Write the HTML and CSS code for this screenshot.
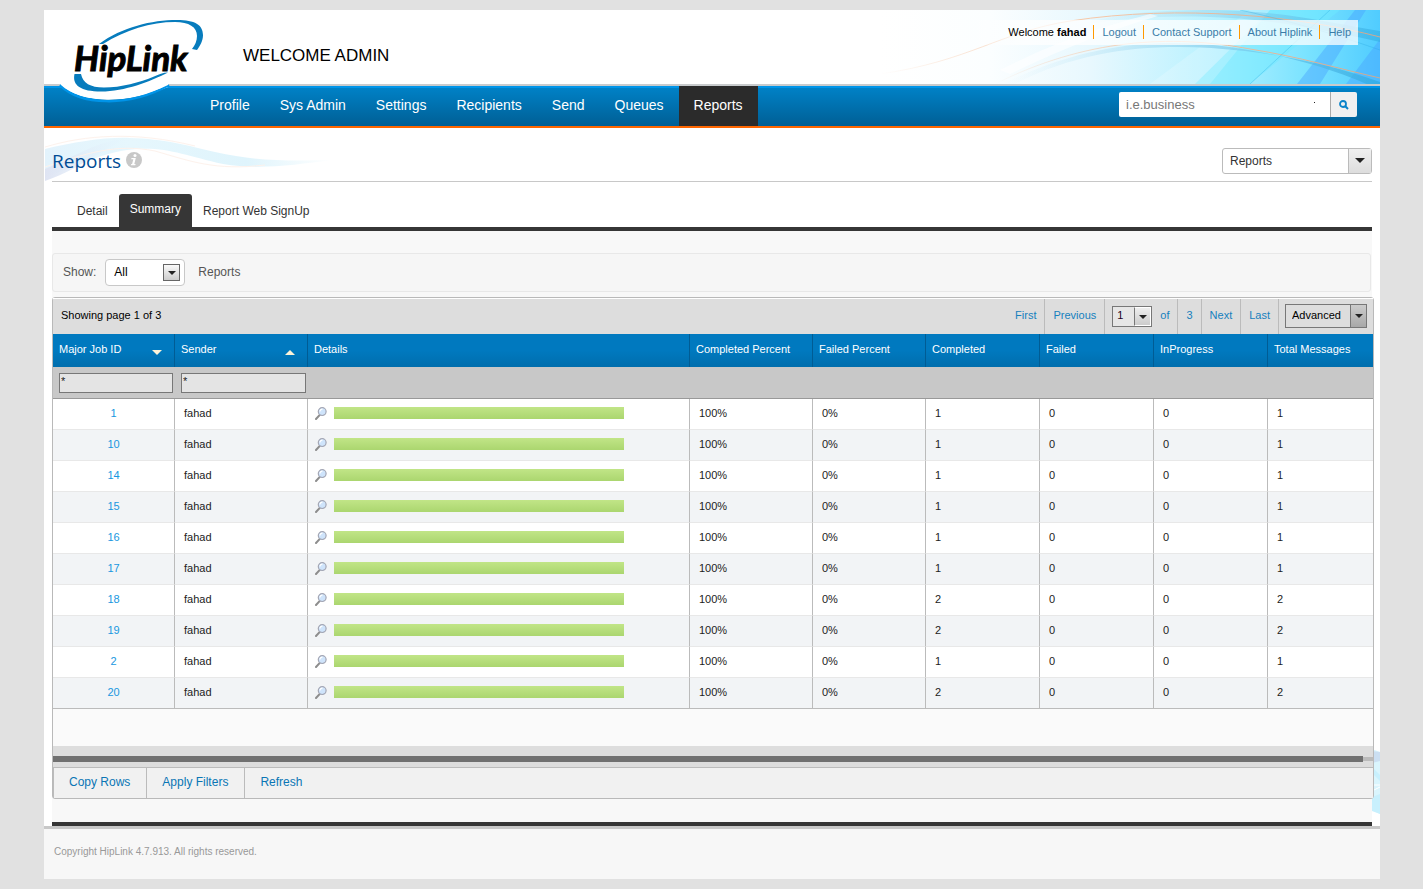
FILE: index.html
```html
<!DOCTYPE html>
<html lang="en">
<head>
<meta charset="utf-8">
<title>HipLink - Reports</title>
<link rel="stylesheet" href="styles.css">
</head>
<body>
<svg class="defs" aria-hidden="true">
  <symbol id="lens" viewBox="0 0 12 13">
    <path d="M4.800 7.800L1 12" stroke="#8d8d8d" stroke-width="2" stroke-linecap="round"/>
    <circle cx="7.200" cy="4.600" r="3.900" fill="#cfe4fb" stroke="#a3a6b4" stroke-width="1.200"/>
    <path d="M5 4.500a2.300 2.300 0 0 1 2.500-2.300" stroke="#fff" stroke-width="1.200" fill="none"/>
  </symbol>
</svg>
<div class="page">
  <header class="header">
    <svg class="header-art" viewBox="0 0 500 74" preserveAspectRatio="xMaxYMid slice" aria-hidden="true">
      <defs>
        <linearGradient id="sky"><stop offset="0" stop-color="#fff"/><stop offset=".22" stop-color="#fbfeff"/><stop offset=".42" stop-color="#e8f8fe"/><stop offset=".68" stop-color="#b5f1ff"/><stop offset=".85" stop-color="#7be3ff"/><stop offset="1" stop-color="#50ccff"/></linearGradient>
        <linearGradient id="fade"><stop offset="0" stop-color="#d5effb" stop-opacity="0"/><stop offset=".4" stop-color="#a8ddf2"/><stop offset="1" stop-color="#2fa9df"/></linearGradient>
        <linearGradient id="thread"><stop offset="0" stop-color="#f8c8a8" stop-opacity="0"/><stop offset=".4" stop-color="#f8c8a8"/><stop offset="1" stop-color="#d0a890"/></linearGradient>
      </defs>
      <path fill="url(#sky)" d="M0 0h500v74H0z"/>
      <path fill="#6ee9ff" opacity=".5" d="M315 74L390 0h70l-90 74z"/>
      <path fill="#fff" opacity=".2" d="M270 74L370 0h20l-60 74z"/>
      <path fill="#4aa5ff" opacity=".45" d="M417 74L475 0h11l-46 74zM466 74l34-45v45z"/>
      <path fill="url(#fade)" opacity=".7" d="M122 74C210 32 280 28 350 37c55 8 105 22 150 43v-8c-45-16-85-25-135-31-80-9-160-6-240 38z" />
      <path fill="url(#fade)" opacity=".55" d="M180 19C240 3 270 0 335 0c70 1 120 14 165 21v11C440 19 390 9 330 7c-60-2-105 3-150 12z"/>
      <path fill="#fff" opacity=".6" d="M120 60C170 35 210 20 270 4l8 2C230 20 180 40 130 64z"/>
      <path fill="none" stroke="url(#thread)" d="M0 64C90 51 120 22 190 11c110-17 230-5 310 16"/>
      <path fill="none" stroke="url(#thread)" d="M115 74c90-45 175-50 255-35 50 8 90 20 130 29"/>
      <path fill="none" stroke="#20a3df" opacity=".3" d="M360 0c55 12 100 26 140 40M370 74L450 0"/>
    </svg>
    <svg class="logo" viewBox="0 0 170 96" role="img" aria-label="HipLink">
      <path fill="#fff" d="M16 73h108v4C82 95 36 93 17 76z"/>
      <path fill="none" stroke="#0094e8" stroke-width="2.500" d="M16 75C36 95 84 98 125 75"/>
      <path fill="#fff" d="M15 70h112l-3 5C82 95 36 93 17 75z"/>
      <g fill="#077cbd">
        <path d="M55 34C78 17 108 10 133 10c18 0 26 5 26 15 0 6-3 11-6 15l-5-1c3-4 5-8 5-13 0-9-8-14-22-14-24 0-50 8-72 22z"/>
        <path d="M30.500 64h6.500c2 9 9 13.500 23 13.500 17 0 36-5 50-11 5-2 9-4 14-4-18 9-43 19-67 19-20 0-29-6-26.500-17.500z"/>
      </g>
      <text class="logo-word" x="30" y="61">HipLink</text>
    </svg>
    <h1 class="welcome">WELCOME ADMIN</h1>
    <div class="user-links">
      <span class="user">Welcome <b>fahad</b></span>
      <a href="#">Logout</a><a href="#">Contact Support</a><a href="#">About Hiplink</a><a href="#">Help</a>
    </div>
  </header>
  <nav class="nav">
    <div class="menu">
      <a href="#">Profile</a><a href="#">Sys Admin</a><a href="#">Settings</a><a href="#">Recipients</a><a href="#">Send</a><a href="#">Queues</a><a href="#" class="active">Reports</a>
    </div>
    <form class="search">
      <input type="text" placeholder="i.e.business" aria-label="Search">
      <span class="speck"></span>
      <button type="button" aria-label="Search"><svg width="10" height="10" viewBox="0 0 10 10"><circle cx="4" cy="4" r="3" fill="none" stroke="#0b83c9" stroke-width="1.800"/><path d="M6.300 6.300L9 9" stroke="#0b83c9" stroke-width="2"/></svg></button>
    </form>
  </nav>
  <main class="main">
    <div class="title-bar">
      <svg class="title-art" viewBox="0 0 290 48" aria-hidden="true">
        <defs>
          <linearGradient id="wave"><stop offset="0" stop-color="#e3f3fc"/><stop offset=".3" stop-color="#e6f7fd"/><stop offset=".7" stop-color="#dff4fc"/><stop offset="1" stop-color="#fff"/></linearGradient>
          <linearGradient id="wave2"><stop offset="0" stop-color="#dfe4f3"/><stop offset="1" stop-color="#e5f8ff" stop-opacity=".4"/></linearGradient>
        </defs>
        <path fill="url(#wave)" d="M0 15C30 8 60 3 85 4c35 1 55 7 85 14 40 9 70 9 118 8-40 5-74 10-110 4-40-9-60-19-96-14C50 21 20 37 0 43z"/>
        <path fill="url(#wave2)" d="M0 35C30 23 50 7 85 4c-25 8-45 29-85 43z"/>
        <path fill="none" stroke="#fdf2ec" d="M0 13C40 1 90-3 150 12M0 33C40 20 70 9 110 17c35 10 60 20 110 14"/>
      </svg>
      <h2 class="title">Reports</h2>
      <svg class="info" width="16" height="16" viewBox="0 0 16 16" role="img" aria-label="Information"><circle cx="8" cy="8" r="8" fill="#c8c8c8"/><circle cx="9" cy="3.500" r="1.500" fill="#fff"/><path fill="#fff" d="M5.500 6h4.300l-1.500 6h1.300l-.3 1.300H4.900l.3-1.300h.9l1.200-4.700H5.200z"/></svg>
      <span class="pick pick-report">
        <select aria-label="Report type"><option>Reports</option></select>
        <span class="arrow"></span>
      </span>
    </div>
    <div class="tabs">
      <a href="#">Detail</a><a href="#" class="active">Summary</a><a href="#">Report Web SignUp</a>
    </div>
    <section class="content">
      <div class="show-bar">
        <label for="show">Show:</label>
        <span class="pick pick-show">
          <select id="show"><option>All</option></select>
          <span class="arrow"></span>
        </span>
        <span class="after">Reports</span>
      </div>
      <div class="panel">
        <div class="toolbar">
          <span class="showing">Showing page 1 of 3</span>
          <a href="#">First</a><a href="#">Previous</a>
          <span class="cell">
            <span class="pick pick-page"><select aria-label="Page"><option>1</option></select><span class="arrow"></span></span>
            <span>of</span>
          </span>
          <a href="#">3</a><a href="#">Next</a><a href="#">Last</a>
          <span class="pick pick-advanced"><select aria-label="Search mode"><option>Advanced</option></select><span class="arrow"></span></span>
        </div>
        <table class="grid">
          <colgroup><col class="c-id"><col class="c-sender"><col><col class="c-cp"><col class="c-fp"><col class="c-num"><col class="c-num"><col class="c-num"><col class="c-total"></colgroup>
          <thead>
            <tr class="heads"><th><span class="sort">Major Job ID<i class="down"></i></span></th><th><span class="sort">Sender<i class="up"></i></span></th><th>Details</th><th>Completed Percent</th><th>Failed Percent</th><th>Completed</th><th>Failed</th><th>InProgress</th><th>Total Messages</th></tr>
            <tr class="filters"><td><input type="text" value="*" aria-label="Filter Major Job ID"></td><td><input type="text" value="*" aria-label="Filter Sender"></td><td colspan="7"></td></tr>
          </thead>
          <tbody>
            <tr><td><a href="#">1</a></td><td>fahad</td><td><div class="detail"><svg><use href="#lens"/></svg><span class="bar"></span></div></td><td>100%</td><td>0%</td><td>1</td><td>0</td><td>0</td><td>1</td></tr>
            <tr><td><a href="#">10</a></td><td>fahad</td><td><div class="detail"><svg><use href="#lens"/></svg><span class="bar"></span></div></td><td>100%</td><td>0%</td><td>1</td><td>0</td><td>0</td><td>1</td></tr>
            <tr><td><a href="#">14</a></td><td>fahad</td><td><div class="detail"><svg><use href="#lens"/></svg><span class="bar"></span></div></td><td>100%</td><td>0%</td><td>1</td><td>0</td><td>0</td><td>1</td></tr>
            <tr><td><a href="#">15</a></td><td>fahad</td><td><div class="detail"><svg><use href="#lens"/></svg><span class="bar"></span></div></td><td>100%</td><td>0%</td><td>1</td><td>0</td><td>0</td><td>1</td></tr>
            <tr><td><a href="#">16</a></td><td>fahad</td><td><div class="detail"><svg><use href="#lens"/></svg><span class="bar"></span></div></td><td>100%</td><td>0%</td><td>1</td><td>0</td><td>0</td><td>1</td></tr>
            <tr><td><a href="#">17</a></td><td>fahad</td><td><div class="detail"><svg><use href="#lens"/></svg><span class="bar"></span></div></td><td>100%</td><td>0%</td><td>1</td><td>0</td><td>0</td><td>1</td></tr>
            <tr><td><a href="#">18</a></td><td>fahad</td><td><div class="detail"><svg><use href="#lens"/></svg><span class="bar"></span></div></td><td>100%</td><td>0%</td><td>2</td><td>0</td><td>0</td><td>2</td></tr>
            <tr><td><a href="#">19</a></td><td>fahad</td><td><div class="detail"><svg><use href="#lens"/></svg><span class="bar"></span></div></td><td>100%</td><td>0%</td><td>2</td><td>0</td><td>0</td><td>2</td></tr>
            <tr><td><a href="#">2</a></td><td>fahad</td><td><div class="detail"><svg><use href="#lens"/></svg><span class="bar"></span></div></td><td>100%</td><td>0%</td><td>1</td><td>0</td><td>0</td><td>1</td></tr>
            <tr><td><a href="#">20</a></td><td>fahad</td><td><div class="detail"><svg><use href="#lens"/></svg><span class="bar"></span></div></td><td>100%</td><td>0%</td><td>2</td><td>0</td><td>0</td><td>2</td></tr>
          </tbody>
        </table>
        <div class="scroller"><div class="track"><div class="thumb"></div></div></div>
        <div class="actions"><button type="button">Copy Rows</button><button type="button">Apply Filters</button><button type="button">Refresh</button></div>
      </div>
    </section>
    <svg class="corner-art" viewBox="0 0 8 72" aria-hidden="true">
      <path fill="#daf5fd" d="M0 4l8 3v62l-8-4z"/><path fill="#cbdff2" d="M0 6l8 1v9l-8 2z"/><path fill="#c8f0fd" d="M0 22l8 8v6l-8-8zM0 52l8-3v20l-8-3z"/><path fill="none" stroke="#fff" d="M0 4l8 1M0 46l8-4M0 40h8"/>
    </svg>
  </main>
  <footer class="footer">Copyright HipLink 4.7.913. All rights reserved.</footer>
</div>
</body>
</html>
```
FILE: styles.css
```css
* { box-sizing: border-box; }
body { margin: 0; padding: 10px 43px 10px 44px; background: #e1e1e1; color: #333; font: 12px/16px "Liberation Sans", Arial, sans-serif; }
a { color: #1580bd; text-decoration: none; }
select, input, button { font: inherit; color: inherit; margin: 0; border-radius: 0; }
select { appearance: none; outline: none; }
.defs { position: absolute; width: 0; height: 0; }
.page { background: #fff; }

.header { position: relative; display: flex; justify-content: space-between; align-items: flex-start; height: 76px; padding: 10px 22px 0 199px; border-bottom: 2px solid #c8cbcd; }
.header-art { position: absolute; top: 0; right: 0; width: 500px; height: 74px; }
.logo { position: absolute; top: 0; left: 0; width: 170px; height: 96px; z-index: 2; }
.logo-word { font: italic 700 35px Lato, sans-serif; fill: #000; stroke: #000; stroke-width: 1px; }
.welcome { margin: 26px 0 0; font-size: 17px; line-height: 20px; font-weight: normal; color: #000; }
.user-links { position: relative; display: flex; align-items: center; height: 25px; padding: 0 0 1px 42px; background: linear-gradient(90deg, rgba(255,255,255,0), rgba(255,255,255,.75) 15%); font-size: 11px; line-height: 14px; }
.user { padding-right: 7px; color: #000; }
.user-links a { padding: 0 7px 0 8px; border-left: 1px solid #f90; color: #3a7ca8; }

.nav { display: flex; justify-content: space-between; align-items: flex-start; height: 42px; padding: 0 23px 0 151px; border-bottom: 2px solid #f60; background: linear-gradient(#0094e8 0, #0094e8 2px, #0081c6 2px, #005f95 40px); }
.menu { display: flex; }
.menu a { padding: 0 15px; font-size: 14px; line-height: 38px; height: 40px; color: #fff; }
.menu .active { background: #2b2b2b; }
.search { position: relative; display: flex; width: 238px; height: 25px; margin-top: 6px; }
.search input { flex: 1; min-width: 0; border: 0; padding: 0 7px; background: #fff; border-radius: 2px 0 0 2px; font-size: 13px; }
.search input::placeholder { color: #777; opacity: 1; }
.search button { width: 27px; border: 0; border-left: 1px solid #aaa; padding: 0; background: #f0f0f0; border-radius: 0 2px 2px 0; }
.search svg { display: block; margin: 0 auto; }
.speck { position: absolute; right: 42px; top: 10px; width: 1px; height: 1px; background: #222; }

.main { position: relative; padding: 0 8px; }
.title-bar { position: relative; display: flex; align-items: center; height: 54px; padding-top: 12px; border-bottom: 1px solid #c8c8c8; }
.title-art { position: absolute; left: -7px; top: 6px; width: 290px; height: 48px; }
.title { position: relative; margin: 0 5px 0 0; font: 500 19px/24px "Open Sans", "Noto Sans", sans-serif; color: #004c94; }
.info { position: relative; margin-bottom: 2px; }

.pick { position: relative; display: inline-flex; }
.pick select { width: 100%; height: 100%; }
.arrow { position: absolute; display: flex; align-items: center; justify-content: center; pointer-events: none; }
.arrow::after { content: ""; border: solid transparent; border-width: 4px 4px 0; border-top-color: #222; }
.pick-report { width: 150px; height: 26px; margin-left: auto; }
.pick-report select { border: 1px solid #bbb; border-radius: 3px; padding: 0 7px; background: #fff; }
.pick-report .arrow { right: 1px; top: 1px; bottom: 1px; width: 23px; border-left: 1px solid #bbb; background: linear-gradient(#f0f0f0, #ddd); }
.pick-report .arrow::after { border-width: 5px 5px 0; }

.tabs { display: flex; align-items: flex-end; height: 49px; padding-left: 14px; border-bottom: 4px solid #363636; }
.tabs a { height: 33px; padding: 9px 11px 0; color: #333; }
.tabs .active { padding-top: 7px; background: #363636; color: #fff; border-radius: 3px 3px 0 0; }

.content { padding: 22px 0 23px; background: #f8f8f8; border-bottom: 4px solid #363636; }
.show-bar { display: flex; align-items: center; height: 39px; margin-right: 1px; padding: 0 10px; border: 1px solid #e8e8e8; border-radius: 3px; background: #f6f6f6; color: #555; }
.show-bar label, .show-bar .after { padding-bottom: 2px; }
.pick-show { width: 80px; height: 27px; margin: 0 13px 0 9px; color: #000; }
.pick-show select { border: 1px solid #c8c8c8; border-radius: 4px; padding: 0 8px 2px; background: #fff; }
.pick-show .arrow { right: 5px; top: 5px; bottom: 5px; width: 17px; border: 1px solid #666; background: linear-gradient(#fafafa, #ccc); }

.panel { position: relative; z-index: 1; margin: 5px -2px 0 0; border: 1px solid #b9b9b9; border-radius: 3px; background: #fafafa; font-size: 11px; }
.toolbar { display: flex; align-items: center; height: 36px; padding-right: 6px; border-top: 1px solid #fff; background: #ddd; }
.showing { margin: 0 auto 3px 8px; color: #000; }
.toolbar > a, .cell { display: flex; align-items: center; align-self: stretch; padding: 0 8px 3px; border-right: 1px solid #bbb; color: #1580bd; }
.cell { padding: 0 8px 0 7px; }
.cell > span:last-child { padding-bottom: 3px; }
.pick-page { width: 40px; height: 21px; margin-right: 8px; color: #202; }
.pick-page select { border: 1px solid #777; padding: 0 4px 3px; background: #e6e6e6; }
.pick-page .arrow { right: 1px; top: 1px; bottom: 1px; width: 17px; border: 1px solid #fff; border-left-color: #777; background: linear-gradient(#eee, #ccc); }
.pick-advanced { width: 82px; height: 24px; margin: 0 0 2px 6px; color: #000; }
.pick-advanced select { border: 1px solid #777; padding: 0 6px 1px; background: #ddd; }
.pick-advanced .arrow { right: 1px; top: 1px; bottom: 1px; width: 16px; border-left: 1px solid #777; background: linear-gradient(#ccc, #a8a8a8); }

.grid { width: 100%; table-layout: fixed; border-spacing: 0; }
.c-id { width: 122px; }
.c-sender { width: 133px; }
.c-cp { width: 123px; }
.c-fp { width: 113px; }
.c-num { width: 114px; }
.c-total { width: 105px; }
.heads { background: linear-gradient(#0079bf 50%, #006ead); color: #fff; }
.heads th { height: 33px; padding: 0 6px 3px; border-right: 1px solid #005c94; font-weight: normal; text-align: left; white-space: nowrap; }
.sort { display: flex; justify-content: space-between; align-items: center; padding-right: 6px; }
.sort i { margin-top: 7px; border: solid transparent; }
.sort .down { border-width: 5px 5px 0; border-top-color: #fdf3d8; }
.sort .up { border-width: 0 5px 5px; border-bottom-color: #fdf3d8; }
.filters td { height: 32px; padding: 0 2px 0 6px; border-bottom: 1px solid #999; background: #c8c8c8; }
.filters input { display: block; width: 100%; height: 20px; border: 1px solid #777; padding: 0 1px 3px; background: #e4e4e4; color: #222; }
.grid tbody td { height: 31px; padding: 0 9px 2px; border-right: 1px solid #bbb; border-bottom: 1px solid #e8e8e8; background: #fff; color: #222; }
.grid tbody tr:nth-child(even) td { background: #f2f4f6; }
.grid tbody tr:last-child td { border-bottom-color: #bbb; }
.grid tbody td:first-child { text-align: center; }
.grid tbody td:nth-child(3) { padding: 0 7px 2px; }
.grid th:last-child, .grid tbody td:last-child { border-right: 0; }
.grid tbody a { color: #1897e0; }
.detail { display: flex; align-items: center; gap: 7px; }
.detail svg { width: 12px; height: 13px; }
.bar { width: 290px; height: 12px; background: linear-gradient(#c1e587, #abd66f); }

.scroller { margin-top: 37px; padding: 10px 0 5px; background: #ddd; }
.track { height: 6px; padding-right: 10px; background: linear-gradient(#ddd 1px, #bbb 1px, #bbb 5px, #ddd 5px); }
.thumb { height: 6px; background: #707070; }
.actions { display: flex; height: 31px; border-top: 1px solid #bbb; border-left: 1px solid #bbb; background: #f1f1f1; font-size: 12px; }
.actions button { border: 0; border-right: 1px solid #bbb; padding: 0 16px 2px 15px; background: none; color: #0a76b5; }
.actions button:last-child { border-right: 0; }
.corner-art { position: absolute; right: 0; bottom: 9px; width: 8px; height: 72px; }

.footer { height: 53px; padding: 15px 10px; border-top: 3px solid #c8c8c8; background: #f7f7f7; color: #999; font-size: 10px; }
```
